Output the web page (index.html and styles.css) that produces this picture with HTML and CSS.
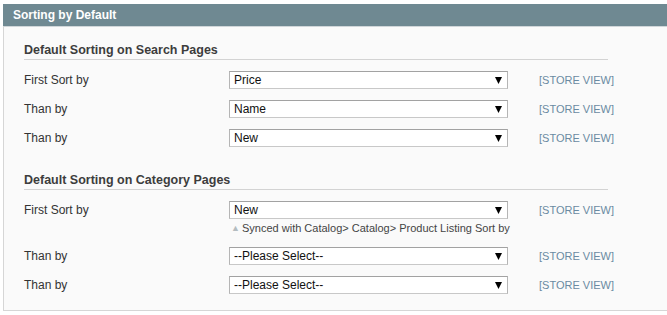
FILE: index.html
```html
<!DOCTYPE html>
<html>
<head>
<meta charset="utf-8">
<link rel="stylesheet" href="styles.css">
</head>
<body>
<div class="panel">
  <div class="panel-head">Sorting by Default</div>
  <div class="panel-body">
    <div class="group">
      <h3 class="legend">Default Sorting on Search Pages</h3>
      <div class="rows">
        <div class="row">
          <label class="label">First Sort by</label>
          <div class="control"><div class="select"><select><option>Price</option></select><svg class="arrow" width="7" height="7" viewBox="0 0 7 7"><path d="M0 0H7L3.5 7Z" fill="#000"/></svg></div></div>
          <span class="scope">[STORE VIEW]</span>
        </div>
        <div class="row">
          <label class="label">Than by</label>
          <div class="control"><div class="select"><select><option>Name</option></select><svg class="arrow" width="7" height="7" viewBox="0 0 7 7"><path d="M0 0H7L3.5 7Z" fill="#000"/></svg></div></div>
          <span class="scope">[STORE VIEW]</span>
        </div>
        <div class="row">
          <label class="label">Than by</label>
          <div class="control"><div class="select"><select><option>New</option></select><svg class="arrow" width="7" height="7" viewBox="0 0 7 7"><path d="M0 0H7L3.5 7Z" fill="#000"/></svg></div></div>
          <span class="scope">[STORE VIEW]</span>
        </div>
      </div>
    </div>
    <div class="group group-second">
      <h3 class="legend">Default Sorting on Category Pages</h3>
      <div class="rows">
        <div class="row">
          <label class="label">First Sort by</label>
          <div class="control"><div class="select"><select><option>New</option></select><svg class="arrow" width="7" height="7" viewBox="0 0 7 7"><path d="M0 0H7L3.5 7Z" fill="#000"/></svg></div>
            <p class="note"><span class="note-icon">&#9650;</span>Synced with Catalog&gt; Catalog&gt; Product Listing Sort by</p>
          </div>
          <span class="scope">[STORE VIEW]</span>
        </div>
        <div class="row">
          <label class="label">Than by</label>
          <div class="control"><div class="select"><select><option>--Please Select--</option></select><svg class="arrow" width="7" height="7" viewBox="0 0 7 7"><path d="M0 0H7L3.5 7Z" fill="#000"/></svg></div></div>
          <span class="scope">[STORE VIEW]</span>
        </div>
        <div class="row">
          <label class="label">Than by</label>
          <div class="control"><div class="select"><select><option>--Please Select--</option></select><svg class="arrow" width="7" height="7" viewBox="0 0 7 7"><path d="M0 0H7L3.5 7Z" fill="#000"/></svg></div></div>
          <span class="scope">[STORE VIEW]</span>
        </div>
      </div>
    </div>
  </div>
</div>
</body>
</html>
```
FILE: styles.css
```css
html, body {
  margin: 0;
  padding: 0;
  background: #fff;
  overflow: hidden;
}
body {
  font-family: "Liberation Sans", Arial, sans-serif;
  font-size: 12px;
  color: #333;
}
.panel {
  margin: 4px 0 0 3px;
  border-left: 1px solid #d6d6d6;
  border-bottom: 1px solid #d6d6d6;
  background: #fafafa;
}
.panel-head {
  height: 22px;
  line-height: 22px;
  padding-left: 10px;
  background: #6f8992;
  color: #fff;
  font-weight: bold;
  font-size: 12px;
  border-bottom: 1px solid #d0d6d9;
  margin-left: -1px;
}
.panel-body {
  padding: 16px 59px 16px 20px;
}
.legend {
  margin: 0;
  font-size: 12.5px;
  line-height: 15px;
  font-weight: bold;
  color: #3d3d3d;
  padding-bottom: 1px;
  border-bottom: 1px solid #d3d3d3;
}
.group-second {
  margin-top: 25px;
}
.group-second .legend {
  padding-top: 1px;
}
.rows {
  margin-top: 11px;
  display: flex;
  flex-direction: column;
  gap: 11px;
}
.row {
  display: grid;
  grid-template-columns: 174px 279px max-content;
  column-gap: 31px;
  align-items: start;
}
.row .control {
  grid-column: 2;
}
.label, .scope {
  line-height: 18px;
  white-space: nowrap;
}
.label {
  color: #333;
}
.scope {
  color: #6a8aa2;
  font-size: 11px;
}
.select {
  position: relative;
  height: 18px;
}
.select select {
  appearance: none;
  -webkit-appearance: none;
  display: block;
  width: 279px;
  height: 18px;
  margin: 0;
  padding: 0 0 0 4px;
  box-sizing: border-box;
  border: 1px solid #b5b5b5;
  border-top-color: #a2a2a2;
  border-bottom-color: #c8c8c8;
  border-radius: 0;
  background: #fff;
  font-family: "Liberation Sans", Arial, sans-serif;
  font-size: 12px;
  color: #111;
  line-height: 16px;
}
.arrow {
  position: absolute;
  right: 6px;
  top: 6px;
}
.note {
  margin: 0;
  padding-top: 1px;
  line-height: 16px;
  font-size: 11px;
  color: #444;
  white-space: nowrap;
}
.note-icon {
  display: inline-block;
  font-size: 9px;
  color: #b4bcc0;
  width: 11px;
  padding-left: 2px;
  vertical-align: 1px;
}
```
